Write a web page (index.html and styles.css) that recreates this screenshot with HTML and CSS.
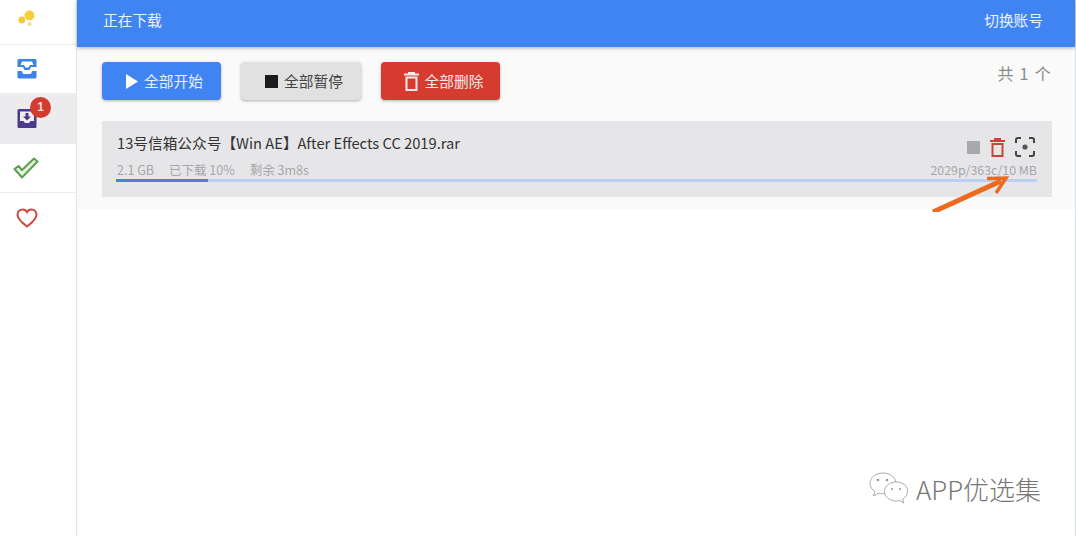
FILE: index.html
```html
<!DOCTYPE html>
<html lang="zh">
<head>
<meta charset="utf-8">
<title>正在下载</title>
<link rel="stylesheet" href="styles.css">
</head>
<body>
<div class="app">
  <nav class="side">
    <div class="side-item logo">
      <svg width="20" height="20" viewBox="0 0 20 20"><circle cx="11.500" cy="6.500" r="5" fill="#f7cf3c"/><circle cx="3.800" cy="11" r="3.400" fill="#f5c93a"/><circle cx="11.500" cy="15" r="2" fill="#f3dc8e"/></svg>
    </div>
    <div class="side-item inbox">
      <svg width="20" height="20" viewBox="0 0 20 20"><path d="M2 0h16a1.500 1.500 0 0 1 1.500 1.500V8H14l-1.500 3h-5L6 8H.5V1.500A1.500 1.500 0 0 1 2 0z" fill="#3d82e6"/><path d="M5 2.500h10l1.500 3.500H13l-1.500 2.500h-3L7 6H3.500z" fill="#fff"/><path d="M.5 12h4.200l1.500 3h7.600l1.500-3h4.200v6a1.500 1.500 0 0 1-1.500 1.500H2A1.500 1.500 0 0 1 .5 18z" fill="#3d82e6"/></svg>
    </div>
    <div class="side-item active">
      <div class="badge-wrap">
        <svg width="20" height="20" viewBox="0 0 20 20"><rect x=".5" y="0" width="19" height="19" rx="1.500" fill="#4a3a8c"/><path d="M3 2.500h14v9.500h-3.500l-1.500 2H8l-1.500-2H3z" fill="#f3eef3"/><path d="M8.500 4h3v3.500h2.500L10 11.500 6 7.500h2.500z" fill="#4a3a8c"/></svg>
        <span class="badge">1</span>
      </div>
    </div>
    <div class="side-item check">
      <svg width="26" height="22" viewBox="0 0 26 22"><path d="M1.500 12l4-3 3.500 4L21 1.500l3.500 3L9 20.500z" fill="#e3efdf" stroke="#5da04c" stroke-width="2" stroke-linejoin="round"/></svg>
    </div>
    <div class="side-item plain">
      <svg width="22" height="20" viewBox="0 0 22 20"><path d="M11 18.500C5 14 1.500 10.800 1.500 6.800 1.500 3.800 3.800 1.500 6.700 1.500 8.500 1.500 10.100 2.500 11 4.100 11.900 2.500 13.500 1.500 15.300 1.500 18.200 1.500 20.500 3.800 20.500 6.800 20.500 10.800 17 14 11 18.500z" fill="none" stroke="#c9473f" stroke-width="2"/></svg>
    </div>
  </nav>
  <main class="main">
    <header class="top">
      <span>正在下载</span>
      <span>切换账号</span>
    </header>
    <section class="panel">
      <div class="toolbar">
        <div class="btns">
          <button class="btn blue"><svg width="12" height="15" viewBox="0 0 12 15"><path d="M0 0l12 7.500L0 15z" fill="#fff"/></svg><span class="label">全部开始</span></button>
          <button class="btn grey"><svg width="13" height="13" viewBox="0 0 13 13"><rect width="13" height="13" fill="#1c1c1c"/></svg><span class="label">全部暂停</span></button>
          <button class="btn red"><svg width="15" height="19" viewBox="0 0 15 19"><path d="M0 2.500h15M5 2V.8h5V2M2.500 5.500h10V18h-10z" fill="none" stroke="#fbe9e7" stroke-width="2"/></svg><span class="label">全部删除</span></button>
        </div>
        <span class="count">共 1 个</span>
      </div>
      <article class="task">
        <div class="task-head">
          <span class="task-name">13号信箱公众号【Win AE】After Effects CC 2019.rar</span>
          <div class="task-icons">
            <svg width="13" height="13" viewBox="0 0 13 13"><rect width="13" height="13" fill="#a9a9ab"/></svg>
            <svg width="15" height="19" viewBox="0 0 15 19"><path d="M2.500 6h10v12h-10z" fill="#e4e6e2"/><path d="M0 3h15M5 2.500V1h5v1.500M2.500 6h10v12h-10z" fill="none" stroke="#c9423c" stroke-width="2"/></svg>
            <svg width="20" height="20" viewBox="0 0 20 20"><path d="M1 6V3a2 2 0 0 1 2-2h3M14 1h3a2 2 0 0 1 2 2v3M19 14v3a2 2 0 0 1-2 2h-3M6 19H3a2 2 0 0 1-2-2v-3" fill="none" stroke="#444" stroke-width="2"/><circle cx="10" cy="10" r="2.600" fill="#555"/></svg>
          </div>
        </div>
        <div class="task-meta">
          <div class="meta-left"><span>2.1 GB</span><span>已下载 10%</span><span>剩余 3m8s</span></div>
          <span class="meta-right">2029p/363c/10 MB</span>
        </div>
        <div class="bar"><div class="bar-fill" style="width:10%"></div></div>
      </article>
    </section>
  </main>
</div>
<svg class="arrow" width="90" height="42" viewBox="0 0 90 42"><path d="M8 42L76 11" stroke="#ec6a1e" stroke-width="5" fill="none"/><path d="M62 8.500L81 8 71 23" fill="none" stroke="#ec6a1e" stroke-width="3.500"/></svg>
<div class="mark">
  <svg width="42" height="36" viewBox="0 0 42 36"><g fill="#fff" stroke="#aaa" stroke-width="1"><path d="M15 2C7.500 2 2 6.800 2 12.500c0 3.300 1.800 6 4.800 8L5.500 25l5-2.800c1.400.4 3 .6 4.500.6 7.500 0 13-4.700 13-10.300S22.500 2 15 2z"/><path d="M28 11c-6.500 0-11.500 4.300-11.500 9.400S21.500 30 28 30c1.300 0 2.500-.2 3.700-.5l4 2.500-1-3.800c2.800-1.800 4.800-4.600 4.800-7.800C40.500 15.300 34.500 11 28 11z"/></g><g fill="#999"><circle cx="10" cy="9" r="1.300"/><circle cx="19" cy="9" r="1.300"/><circle cx="24" cy="18" r="1.100"/><circle cx="32" cy="18" r="1.100"/></g></svg>
  <span>APP优选集</span>
</div>
</body>
</html>
```
FILE: styles.css
```css
* { box-sizing: border-box; }
html, body { margin: 0; height: 100%; background: #fff; overflow: hidden; }
body { position: relative; font-family: "Noto Sans CJK SC", "Noto Sans", sans-serif; color: #333; }
.app { display: flex; height: 536px; border-right: 1px solid #d5dfe4; }
.side { width: 77px; flex: none; border-right: 1px solid #e6e6e8; box-shadow: 1px 0 3px rgba(0,0,0,.05); background: #fff; }
.side-item { height: 49px; display: flex; align-items: center; padding-left: 16px; border-bottom: 1px solid #ececec; }
.side-item.logo { height: 45px; padding-left: 18px; padding-bottom: 6px; }
.side-item.inbox { padding-left: 17px; }
.side-item.active { background: #ececee; height: 50px; border-bottom: 0; padding-left: 17px; }
.side-item.check { padding-left: 13px; }
.side-item.plain { border-bottom: 0; }
.badge-wrap { position: relative; display: flex; }
.badge { position: absolute; left: 13px; top: -12px; width: 21px; height: 21px; border-radius: 50%; background: #d23c30; color: #f8dcd8; font: 700 12px/21px "Liberation Sans", sans-serif; text-align: center; }
.main { flex: 1; min-width: 0; display: flex; flex-direction: column; }
.top { height: 47px; flex: none; background: #3f84f0; box-shadow: 0 1px 4px rgba(0,0,0,.3); color: #eef4ff; font-size: 14.700px; display: flex; justify-content: space-between; align-items: flex-start; padding: 10px 32px 0 26px; line-height: 20px; position: relative; }
.panel { height: 162px; background: #fafafb; padding: 15px 23px 0 25px; }
.toolbar { display: flex; justify-content: space-between; align-items: flex-start; }
.btns { display: flex; gap: 20px; }
.btn { width: 119px; height: 38px; border: 0; border-radius: 4px; font: 14.700px "Noto Sans CJK SC", sans-serif; display: flex; align-items: center; justify-content: center; gap: 6px; box-shadow: 0 1px 3px rgba(0,0,0,.3); padding: 0 0 0 6px; }
.label { position: relative; top: -1px; }
.blue { background: #3f84f0; color: #e9f1ff; }
.grey { background: #e1e1e2; color: #444; width: 120px; }
.red { background: #d63b2f; color: #fbe9e7; }
.count { font-size: 16px; color: #8a8a8a; letter-spacing: 1.300px; line-height: 22px; }
.task { margin-top: 21px; height: 76px; background: #e6e6e8; padding: 10px 15px 0 15px; }
.task-head { display: flex; justify-content: space-between; align-items: flex-start; height: 29px; }
.task-name { font-size: 14.700px; line-height: 24px; color: #333; }
.task-icons { display: flex; align-items: center; gap: 10px; padding: 6px 2px 0 0; }
.task-meta { display: flex; justify-content: space-between; font: 12.500px/16px "Noto Sans CJK SC", sans-serif; color: #a6a6a8; margin-top: 2px; }
.meta-right { font-size: 12.400px; }
.meta-left { display: flex; gap: 15px; }
.bar { height: 3px; background: #bcd0f2; margin: 1px 0 0 -1px; width: 921px; }
.bar-fill { height: 100%; background: #4a7fdc; }
.arrow { position: absolute; left: 925px; top: 170px; }
.mark { position: absolute; left: 868px; top: 471px; display: flex; align-items: center; gap: 6px; color: #777; font-size: 26px; line-height: 36px; font-weight: 300; }
```
